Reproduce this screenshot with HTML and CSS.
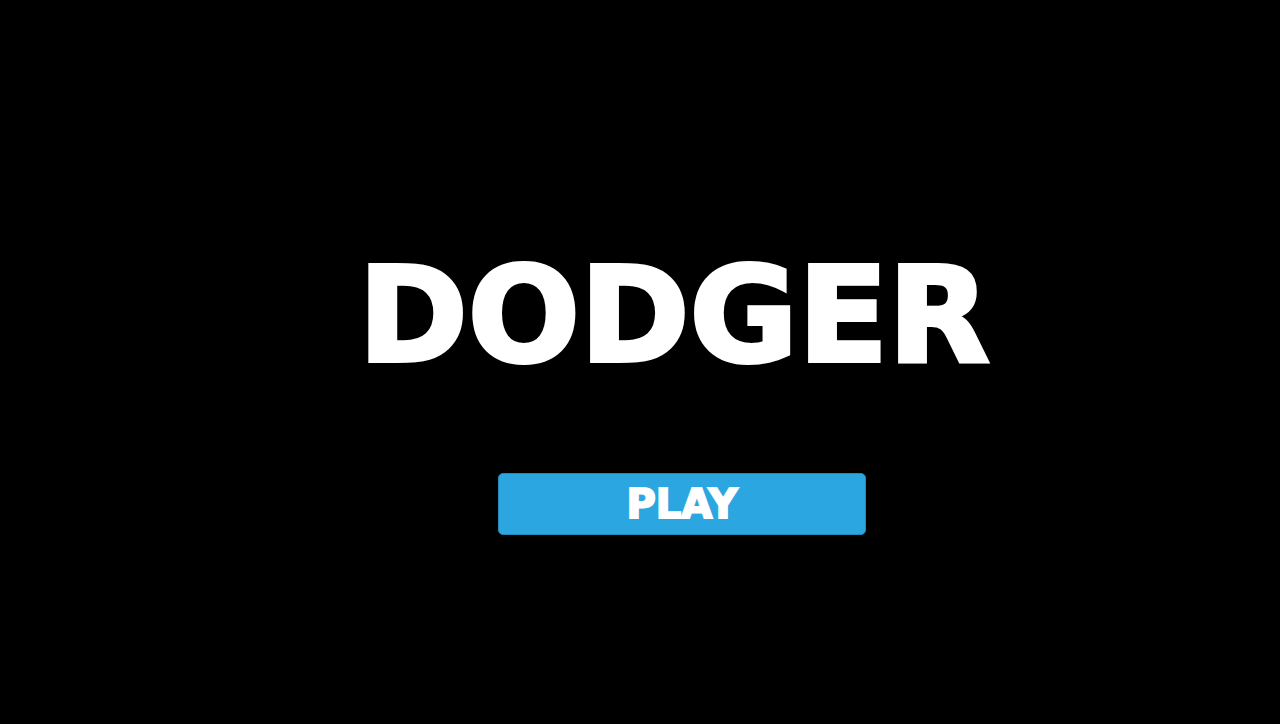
FILE: index.html
```
<!DOCTYPE html>
<html lang="en">
  <head>
    <meta charset="UTF-8" />
    <meta name="viewport" content="width=device-width, initial-scale=1.0" />
    <title>Dodger</title>
    <link rel="stylesheet" href="styles.css">
  </head>
  <body>
    <main class="menu">
      <h1 class="title">DODGER</h1>
      <button class="play" type="button">PLAY</button>
    </main>
  </body>
</html>
```

FILE: styles.css
```
body {
  margin: 0;
  background-color: #000;
  color: #fff;
  font-family: "DejaVu Sans", sans-serif;
}

.menu {
  box-sizing: border-box;
  min-height: 100vh;
  padding: 60px 0 0 84px;
  display: flex;
  flex-direction: column;
  align-items: center;
  justify-content: center;
  gap: 92px;
}

.title {
  margin: 0;
  padding-right: 16px;
  font-size: 132px;
  font-weight: bold;
  line-height: 132px;
  -webkit-text-stroke: 4px #fff;
}

.play {
  box-sizing: border-box;
  width: 368px;
  max-width: 100%;
  padding: 6px 12px;
  border: 1px solid #2489bb;
  border-radius: 5px;
  background-color: #2ba6e1;
  color: #fff;
  font-family: inherit;
  font-size: 40px;
  font-weight: bold;
  line-height: 48px;
  -webkit-text-stroke: 2px #fff;
  cursor: pointer;
}

.play:hover {
  background-color: #2489bb;
}
```
